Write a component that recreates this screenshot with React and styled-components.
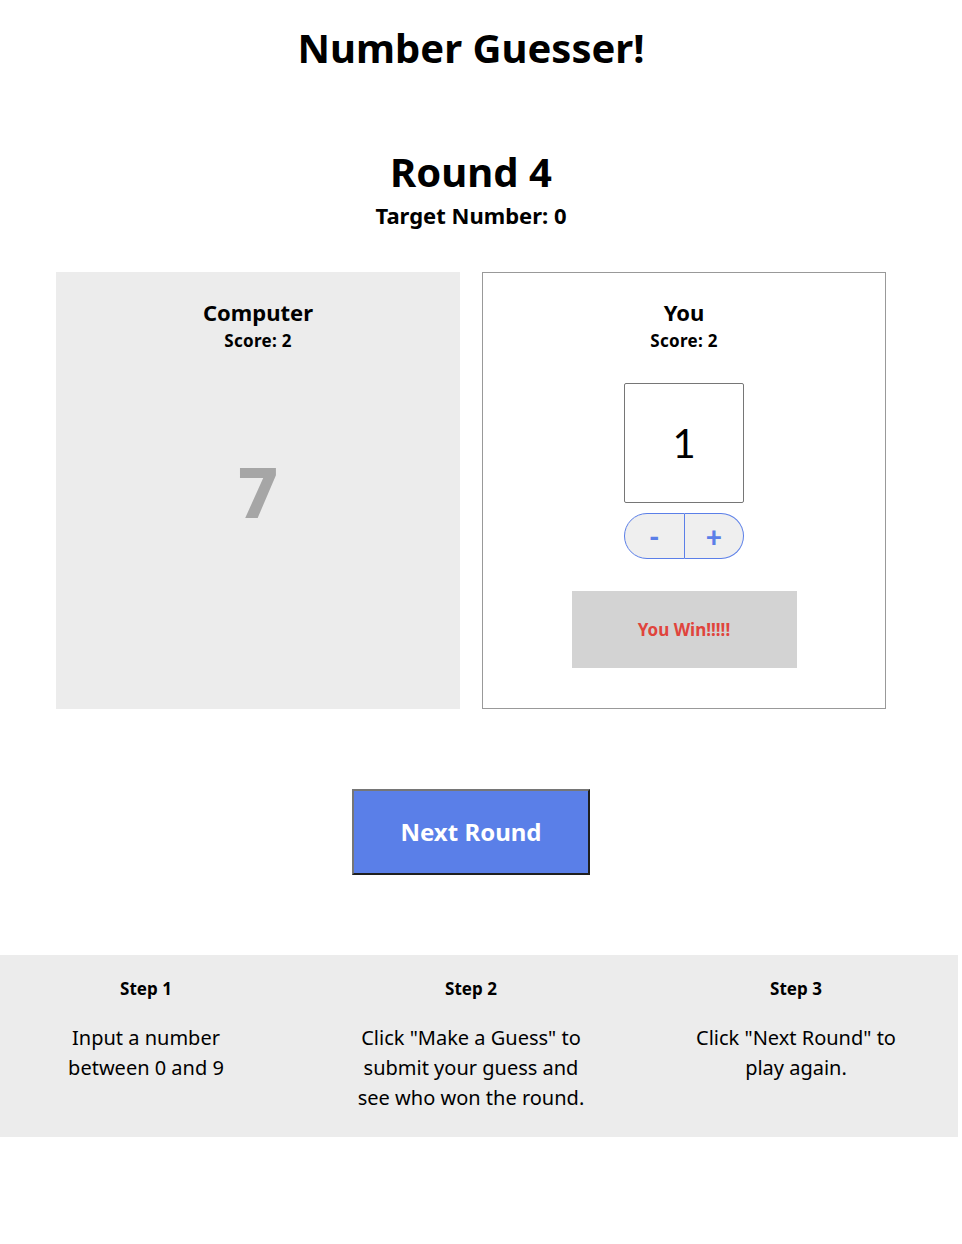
import React, { useState } from "react";
import styled, { createGlobalStyle } from "styled-components";

const GlobalStyle = createGlobalStyle`
  body {
    margin: 0;
    background: #fff;
    font-family: "Noto Sans", "Lato", sans-serif;
    color: #000;
  }
`;

const Page = styled.div`
  width: 958px;
`;

const Main = styled.main`
  width: 942px;
  display: flex;
  flex-direction: column;
  align-items: center;
`;

const Title = styled.h1`
  margin: 24px 0 0;
  font-size: 40px;
  line-height: 48px;
  font-weight: 700;
`;

const RoundTitle = styled.h2`
  margin: 76px 0 0;
  font-size: 40px;
  line-height: 48px;
  font-weight: 700;
`;

const Target = styled.h3`
  margin: 6px 0 0;
  font-size: 22px;
  line-height: 26px;
  font-weight: 700;
`;

const Board = styled.section`
  margin-top: 44px;
  display: flex;
  gap: 22px;
  justify-content: center;
`;

const Panel = styled.div`
  width: 404px;
  height: 437px;
  flex-shrink: 0;
  box-sizing: border-box;
  padding-top: ${(p) => (p.$framed ? 26 : 27)}px;
  background: ${(p) => (p.$framed ? "#fff" : "#ececec")};
  border: ${(p) => (p.$framed ? "1px solid #999" : "none")};
  display: flex;
  flex-direction: column;
  align-items: center;
`;

const PanelName = styled.h4`
  margin: 0;
  font-size: 22px;
  line-height: 26px;
  font-weight: 700;
`;

const Score = styled.p`
  margin: 6px 0 0;
  font-size: 17px;
  line-height: 20px;
  font-weight: 700;
  letter-spacing: 0.3px;
`;

const ComputerGuess = styled.div`
  margin-top: 100px;
  font-size: 70px;
  line-height: 80px;
  font-weight: 800;
  color: #a6a6a6;
`;

const GuessInput = styled.input`
  margin-top: 32px;
  width: 120px;
  height: 120px;
  box-sizing: border-box;
  border: 1px solid #767676;
  border-radius: 2px;
  text-align: center;
  font-family: "Lato", sans-serif;
  font-size: 40px;
  color: #000;
  background: #fff;
  outline: none;
`;

const Stepper = styled.div`
  margin-top: 10px;
  display: flex;
  width: 120px;
  height: 46px;
`;

const StepButton = styled.button`
  flex: 1;
  box-sizing: border-box;
  border: 1px solid #5b7fe8;
  border-left-width: ${(p) => (p.$side === "right" ? 0 : 1)}px;
  border-radius: ${(p) => (p.$side === "left" ? "23px 0 0 23px" : "0 23px 23px 0")};
  background: #efefef;
  color: #5b7fe8;
  font-family: "Lato", sans-serif;
  font-size: 28px;
  font-weight: 900;
  line-height: 1;
  padding: 0;
  cursor: pointer;
`;

const Result = styled.div`
  margin-top: 32px;
  width: 225px;
  height: 77px;
  background: #d3d3d3;
  display: flex;
  align-items: center;
  justify-content: center;
  color: #e0443c;
  font-size: 17px;
  font-weight: 700;
`;

const NextButton = styled.button`
  margin-top: 80px;
  width: 238px;
  height: 86px;
  box-sizing: border-box;
  padding: 0 0 2px;
  background: #5a7fe8;
  color: #fff;
  font-family: "Noto Sans", sans-serif;
  font-size: 24px;
  font-weight: 700;
  border-style: solid;
  border-width: 2px;
  border-color: #767676 #1f1f1f #1f1f1f #767676;
  cursor: pointer;
`;

const Guide = styled.footer`
  margin-top: 80px;
  width: 958px;
  background: #ececec;
  padding: 24px 0 24px;
  box-sizing: border-box;
  display: grid;
  grid-template-columns: 292px 358px 292px;
`;

const Step = styled.div`
  display: flex;
  flex-direction: column;
  align-items: center;
  text-align: center;
`;

const StepTitle = styled.h5`
  margin: 0;
  font-size: 17px;
  line-height: 20px;
  font-weight: 700;
`;

const StepText = styled.p`
  margin: 24px 0 0;
  max-width: ${(p) => p.$max}px;
  font-size: 20px;
  line-height: 30px;
`;

const steps = [
  { title: "Step 1", text: "Input a number between 0 and 9", max: 180 },
  { title: "Step 2", text: 'Click "Make a Guess" to submit your guess and see who won the round.', max: 250 },
  { title: "Step 3", text: 'Click "Next Round" to play again.', max: 230 },
];

const App = () => {
  const [guess, setGuess] = useState(1);

  return (
    <Page>
      <GlobalStyle />
      <Main>
        <Title>Number Guesser!</Title>
        <RoundTitle>Round 4</RoundTitle>
        <Target>Target Number: 0</Target>
        <Board>
          <Panel>
            <PanelName>Computer</PanelName>
            <Score>Score: 2</Score>
            <ComputerGuess>7</ComputerGuess>
          </Panel>
          <Panel $framed>
            <PanelName>You</PanelName>
            <Score>Score: 2</Score>
            <GuessInput
              type="text"
              value={guess}
              onChange={(e) => setGuess(e.target.value)}
            />
            <Stepper>
              <StepButton $side="left" onClick={() => setGuess(Number(guess) - 1)}>
                -
              </StepButton>
              <StepButton $side="right" onClick={() => setGuess(Number(guess) + 1)}>
                +
              </StepButton>
            </Stepper>
            <Result>You Win!!!!!</Result>
          </Panel>
        </Board>
        <NextButton>Next Round</NextButton>
      </Main>
      <Guide>
        {steps.map((step) => (
          <Step key={step.title}>
            <StepTitle>{step.title}</StepTitle>
            <StepText $max={step.max}>{step.text}</StepText>
          </Step>
        ))}
      </Guide>
    </Page>
  );
};

export default App;
